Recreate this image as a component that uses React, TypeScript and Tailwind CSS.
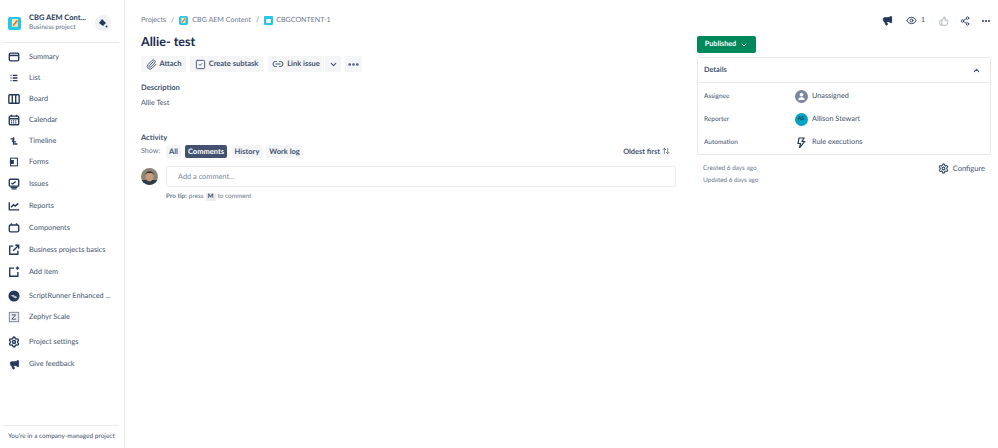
import { ReactNode } from "react";
import {
  Paperclip,
  Link2,
  ChevronDown,
  ChevronUp,
  Ellipsis,
  Eye,
  ThumbsUp,
  Share2,
  Megaphone,
  Settings,
  ArrowUpDown,
  User,
  SquareCheck,
} from "lucide-react";

const ink = "#253858";

function Svg({ children }: { children: ReactNode }) {
  return (
    <svg width="12" height="12" viewBox="0 0 14 14" fill="none" stroke={ink} strokeWidth="1.6">
      {children}
    </svg>
  );
}

const navIcons: Record<string, ReactNode> = {
  summary: (
    <Svg>
      <rect x="1.5" y="2.5" width="11" height="9" rx="1.5" />
      <path d="M1.5 5.2h11" strokeWidth="1.8" />
    </Svg>
  ),
  list: (
    <Svg>
      <path d="M3 4h1M3 7h1M3 10h1M5.5 4h5.5M5.5 7h5.5M5.5 10h5.5" />
    </Svg>
  ),
  board: (
    <Svg>
      <rect x="1" y="2" width="12" height="10" rx="1" />
      <path d="M5 2v10M9 2v10" />
    </Svg>
  ),
  calendar: (
    <Svg>
      <rect x="1.5" y="2.5" width="11" height="10" rx="1" />
      <path d="M1.5 5.5h11M4 1v2M10 1v2" />
      <path d="M3.5 8h7M3.5 10.3h7" strokeDasharray="1.2 1" />
    </Svg>
  ),
  timeline: (
    <Svg>
      <path d="M6.5 2.5v9M3 4.5h3M4.5 7h2M7.5 8h2M7.5 10.5h3.5" strokeWidth="1.7" />
    </Svg>
  ),
  forms: (
    <Svg>
      <rect x="3" y="2.5" width="8" height="9" strokeWidth="1.2" />
      <rect x="3" y="5.5" width="3" height="3" fill={ink} />
    </Svg>
  ),
  issues: (
    <Svg>
      <rect x="1.5" y="1.5" width="11" height="8" rx="1" />
      <path d="M4 6l1.5 1L9 4M3 11h8M4 12.7h6" />
    </Svg>
  ),
  reports: (
    <Svg>
      <path d="M1.5 2.5v9h11.5" />
      <path d="M3.5 8.5l3-3 2 1.5 3.5-3" strokeWidth="1.8" />
    </Svg>
  ),
  components: (
    <Svg>
      <rect x="1.5" y="3.5" width="11" height="8" rx="1.5" />
      <path d="M4 1.5v2M10 1.5v2" />
    </Svg>
  ),
  basics: (
    <Svg>
      <path d="M6 2.5H2v9.5h9.5V8" />
      <path d="M6 8l6-6M8.5 1.5h4v4" />
    </Svg>
  ),
  add: (
    <Svg>
      <path d="M7 2.5H2v9.5h9.5V7" />
      <path d="M11 .5v4M9 2.5h4" />
    </Svg>
  ),
  script: (
    <svg width="12" height="12" viewBox="0 0 14 14">
      <circle cx="7" cy="7" r="6.5" fill={ink} />
      <path d="M3 6.5l3-1 5 3-2 1.5z" fill="#c1c7d0" />
    </svg>
  ),
  zephyr: (
    <svg width="12" height="12" viewBox="0 0 14 14" fill="none" stroke="#6b778c" strokeWidth="1">
      <rect x="1.5" y="1.5" width="11" height="11" fill="#ebecf0" />
      <path d="M4.5 4.5h4.5l-4.5 5h5" stroke="#42526e" strokeWidth="1.1" />
    </svg>
  ),
  settings: <Settings size={12} color={ink} strokeWidth={2.8} />,
  feedback: <Megaphone size={11} color={ink} fill={ink} strokeWidth={1.6} />,
};

const navItems = [
  { icon: "summary", label: "Summary", mt: "mt-0" },
  { icon: "list", label: "List", mt: "mt-[1px]" },
  { icon: "board", label: "Board", mt: "mt-[1px]" },
  { icon: "calendar", label: "Calendar", mt: "mt-[1px]" },
  { icon: "timeline", label: "Timeline", mt: "mt-[1px]" },
  { icon: "forms", label: "Forms", mt: "mt-[1px]" },
  { icon: "issues", label: "Issues", mt: "mt-[2px]" },
  { icon: "reports", label: "Reports", mt: "mt-[2px]" },
  { icon: "components", label: "Components", mt: "mt-[2px]" },
  { icon: "basics", label: "Business projects basics", mt: "mt-[2px]" },
  { icon: "add", label: "Add item", mt: "mt-[2px]" },
  { icon: "script", label: "ScriptRunner Enhanced ...", mt: "mt-[4px]" },
  { icon: "zephyr", label: "Zephyr Scale", mt: "mt-[1px]" },
  { icon: "settings", label: "Project settings", mt: "mt-[5px]" },
  { icon: "feedback", label: "Give feedback", mt: "mt-[2px]" },
];

function ProjectLogo({ size }: { size: string }) {
  return (
    <div className={`${size} shrink-0 rounded-[2px] bg-[#26c6e8] flex items-center justify-center`}>
      <svg viewBox="0 0 10 10" className="w-3/4 h-3/4">
        <rect x="2" y="1" width="6" height="8" fill="#ffe9a8" />
        <path d="M3 7l4-5 1 1-4 5H3z" fill="#e5533d" />
      </svg>
    </div>
  );
}

function Sidebar() {
  return (
    <aside className="w-[125px] h-[448px] shrink-0 border-r border-[#e8eaee] flex flex-col">
      <div className="ml-[3px] mr-[5px] h-[43px] flex items-end pb-[9px] border-b border-[#e6e8ec]">
        <div className="flex items-center w-full pl-[5px]">
          <ProjectLogo size="w-[13px] h-[13px]" />
          <div className="ml-[8px] flex-1 min-w-0">
            <div className="text-[7.5px] leading-[10px] font-bold text-[#253858] whitespace-nowrap">CBG AEM Cont...</div>
            <div className="text-[6.5px] leading-[10px] text-[#5e6c84] whitespace-nowrap">Business project</div>
          </div>
          <div className="w-[16px] h-[16px] mr-[8px] rounded-full bg-[#f1f2f5] flex items-center justify-center">
            <svg width="10" height="10" viewBox="0 0 10 10">
              <path d="M4 1l4 4-3 3-4-3z" fill={ink} />
              <circle cx="8.5" cy="8.5" r="1" fill={ink} />
            </svg>
          </div>
        </div>
      </div>
      <nav className="pt-[4px]">
        {navItems.map((item) => (
          <div key={item.label} className={`${item.mt} h-[20px] flex items-center pl-[7px]`}>
            <span className="w-[14px] flex justify-center">{navIcons[item.icon]}</span>
            <span className="ml-[8px] text-[7.3px] text-[#42526e] whitespace-nowrap">{item.label}</span>
          </div>
        ))}
      </nav>
      <div className="mt-auto ml-[3px] mr-[5px] h-[23px] border-t border-[#ebecf0] flex items-center pl-[5px] text-[6.5px] text-[#42526e] whitespace-nowrap">
        You're in a company-managed project
      </div>
    </aside>
  );
}

function ActionButton({ icon, label, w }: { icon: ReactNode; label: string; w: string }) {
  return (
    <div className={`${w} h-[16px] rounded-[2px] bg-[#f4f5f7] flex items-center justify-center gap-[3px] text-[7.5px] font-bold text-[#42526e] whitespace-nowrap`}>
      {icon}
      {label}
    </div>
  );
}

function Tab({ label, w, active, className = "" }: { label: string; w: string; active?: boolean; className?: string }) {
  return (
    <div
      className={`${w} ${className} h-[13px] rounded-[2px] flex items-center justify-center text-[7.5px] font-bold ${
        active ? "bg-[#42526e] text-white" : "bg-[#f4f5f7] text-[#42526e]"
      }`}
    >
      {label}
    </div>
  );
}

function DetailRow({ label, icon, value }: { label: string; icon: ReactNode; value: string }) {
  return (
    <div className="h-[23px] flex items-center">
      <div className="w-[90px] text-[6.5px] text-[#42526e]">{label}</div>
      <div className="w-[14px] flex justify-center">{icon}</div>
      <div className="ml-[4px] text-[7.3px] text-[#42526e]">{value}</div>
    </div>
  );
}

export default function App() {
  return (
    <div className="flex w-[998px] h-[448px] overflow-hidden bg-white font-['Lato',sans-serif] [text-rendering:geometricPrecision]">
      <Sidebar />
      <main className="flex-1 pl-[16px] pr-[7px] pt-[15px] flex gap-[21px]">
        <section className="w-[535px]">
          <div className="h-[11px] flex items-center text-[7.1px] text-[#6b778c] whitespace-nowrap">
            <span>Projects</span>
            <span className="mx-[5px]">/</span>
            <ProjectLogo size="w-[9px] h-[9px]" />
            <span className="ml-[4px]">CBG AEM Content</span>
            <span className="mx-[5px]">/</span>
            <div className="w-[9px] h-[9px] rounded-[1px] bg-[#26c6e8] flex items-center justify-center">
              <div className="w-[5px] h-[4px] bg-white rounded-[1px]" />
            </div>
            <span className="ml-[3px]">CBGCONTENT-1</span>
          </div>
          <h1 className="mt-[6px] text-[12.6px] leading-[20px] font-bold text-[#172b4d]">Allie- test</h1>
          <div className="mt-[4px] flex items-center">
            <ActionButton w="w-[45px]" icon={<Paperclip size={11} color="#42526e" />} label="Attach" />
            <div className="w-[4px]" />
            <ActionButton w="w-[73px]" icon={<SquareCheck size={11} color="#42526e" />} label="Create subtask" />
            <div className="w-[5px]" />
            <ActionButton w="w-[56px]" icon={<Link2 size={12} color="#42526e" />} label="Link issue" />
            <div className="ml-[1px] w-[16px] h-[16px] rounded-r-[2px] bg-[#f4f5f7] flex items-center justify-center">
              <ChevronDown size={9} color="#42526e" strokeWidth={3} />
            </div>
            <div className="ml-[4px] w-[17px] h-[16px] rounded-[2px] bg-[#f4f5f7] flex items-center justify-center">
              <Ellipsis size={13} color="#42526e" strokeWidth={3} />
            </div>
          </div>
          <div className="mt-[10px] text-[7.5px] leading-[11px] font-bold text-[#42526e]">Description</div>
          <div className="mt-[4px] text-[7.2px] leading-[11px] text-[#42526e]">Allie Test</div>
          <div className="mt-[24px] text-[7.5px] leading-[11px] font-bold text-[#42526e]">Activity</div>
          <div className="mt-[2px] flex items-center">
            <span className="text-[7.2px] text-[#6b778c] w-[25px]">Show:</span>
            <div className="flex gap-[4px]">
              <Tab w="w-[15px]" label="All" />
              <Tab w="w-[42px]" label="Comments" active />
              <Tab w="w-[30px]" label="History" className="ml-[1px]" />
              <Tab w="w-[37px]" label="Work log" />
            </div>
            <div className="ml-auto mr-[6px] flex items-center gap-[2px] text-[7.4px] font-bold text-[#42526e] whitespace-nowrap">
              Oldest first <ArrowUpDown size={8} color="#42526e" />
            </div>
          </div>
          <div className="mt-[8px] flex items-start">
            <svg width="17" height="17" viewBox="0 0 17 17" className="mt-[2px] rounded-full shrink-0">
              <rect width="17" height="17" fill="#8d8478" />
              <rect y="12" width="17" height="5" fill="#2f3a47" />
              <ellipse cx="8.5" cy="8.5" rx="4" ry="5" fill="#c79a7c" />
              <path d="M4.5 7c0-5 8-5 8 0l-1.5-2h-5z" fill="#3c2d22" />
            </svg>
            <div className="ml-[8px] flex-1">
              <div className="h-[21px] border border-[#ebecf0] rounded-[2px] flex items-center pl-[11px] text-[7.4px] text-[#7a869a]">
                Add a comment...
              </div>
              <div className="mt-[5px] flex items-center text-[6.4px] text-[#6b778c]">
                <b className="font-bold mr-[2px]">Pro tip:</b> press
                <span className="mx-[2px] px-[2px] h-[8px] flex items-center bg-[#ebecf0] rounded-[1px] font-bold text-[#42526e]">M</span>
                to comment
              </div>
            </div>
          </div>
        </section>
        <section className="flex-1">
          <div className="h-[11px] flex items-center justify-end whitespace-nowrap">
            <Megaphone size={11} color={ink} fill={ink} />
            <div className="flex items-center gap-[4px] ml-[13px]">
              <Eye size={11} color={ink} />
              <span className="text-[7px] text-[#42526e]">1</span>
            </div>
            <ThumbsUp size={10} color="#a5adba" className="ml-[14px]" />
            <Share2 size={10} color={ink} className="ml-[11px]" />
            <Ellipsis size={10} color={ink} strokeWidth={3} className="ml-[11px]" />
          </div>
          <div className="mt-[10px] w-[59px] h-[17px] rounded-[2px] bg-[#00875a] flex items-center justify-center gap-[4px] text-[7.2px] font-bold text-white">
            Published <ChevronDown size={8} color="white" strokeWidth={3} />
          </div>
          <div className="mt-[4px] border border-[#e6e8ec] rounded-[2px]">
            <div className="h-[25px] border-b border-[#e6e8ec] flex items-center justify-between pl-[6px] pr-[9px] text-[7.3px] font-bold text-[#42526e]">
              Details
              <ChevronUp size={9} color="#42526e" strokeWidth={3} />
            </div>
            <div className="pl-[6px] pt-[2px]">
              <DetailRow
                label="Assignee"
                value="Unassigned"
                icon={
                  <div className="w-[13px] h-[13px] rounded-full bg-[#7a869a] flex items-center justify-center">
                    <User size={9} color="white" fill="white" />
                  </div>
                }
              />
              <DetailRow
                label="Reporter"
                value="Allison Stewart"
                icon={
                  <div className="w-[13px] h-[13px] rounded-full bg-[#00a3bf] flex items-center justify-center text-[5.5px] text-[#172b4d]">
                    AS
                  </div>
                }
              />
              <DetailRow
                label="Automation"
                value="Rule executions"
                icon={
                  <svg width="12" height="12" viewBox="0 0 12 12" fill="none" stroke={ink} strokeWidth="1.2">
                    <path d="M4 1h5L7 4.5h2.5L4.5 11 5.5 6.5H3z" />
                  </svg>
                }
              />
            </div>
          </div>
          <div className="mt-[8px] flex justify-between pl-[6px] pr-[6px]">
            <div className="text-[6.4px] leading-[11.5px] text-[#6b778c]">
              <div>Created 6 days ago</div>
              <div>Updated 6 days ago</div>
            </div>
            <div className="flex items-center gap-[4px] h-[11px] text-[7.5px] text-[#42526e]">
              <Settings size={11} color="#42526e" strokeWidth={2.6} />
              Configure
            </div>
          </div>
        </section>
      </main>
    </div>
  );
}
